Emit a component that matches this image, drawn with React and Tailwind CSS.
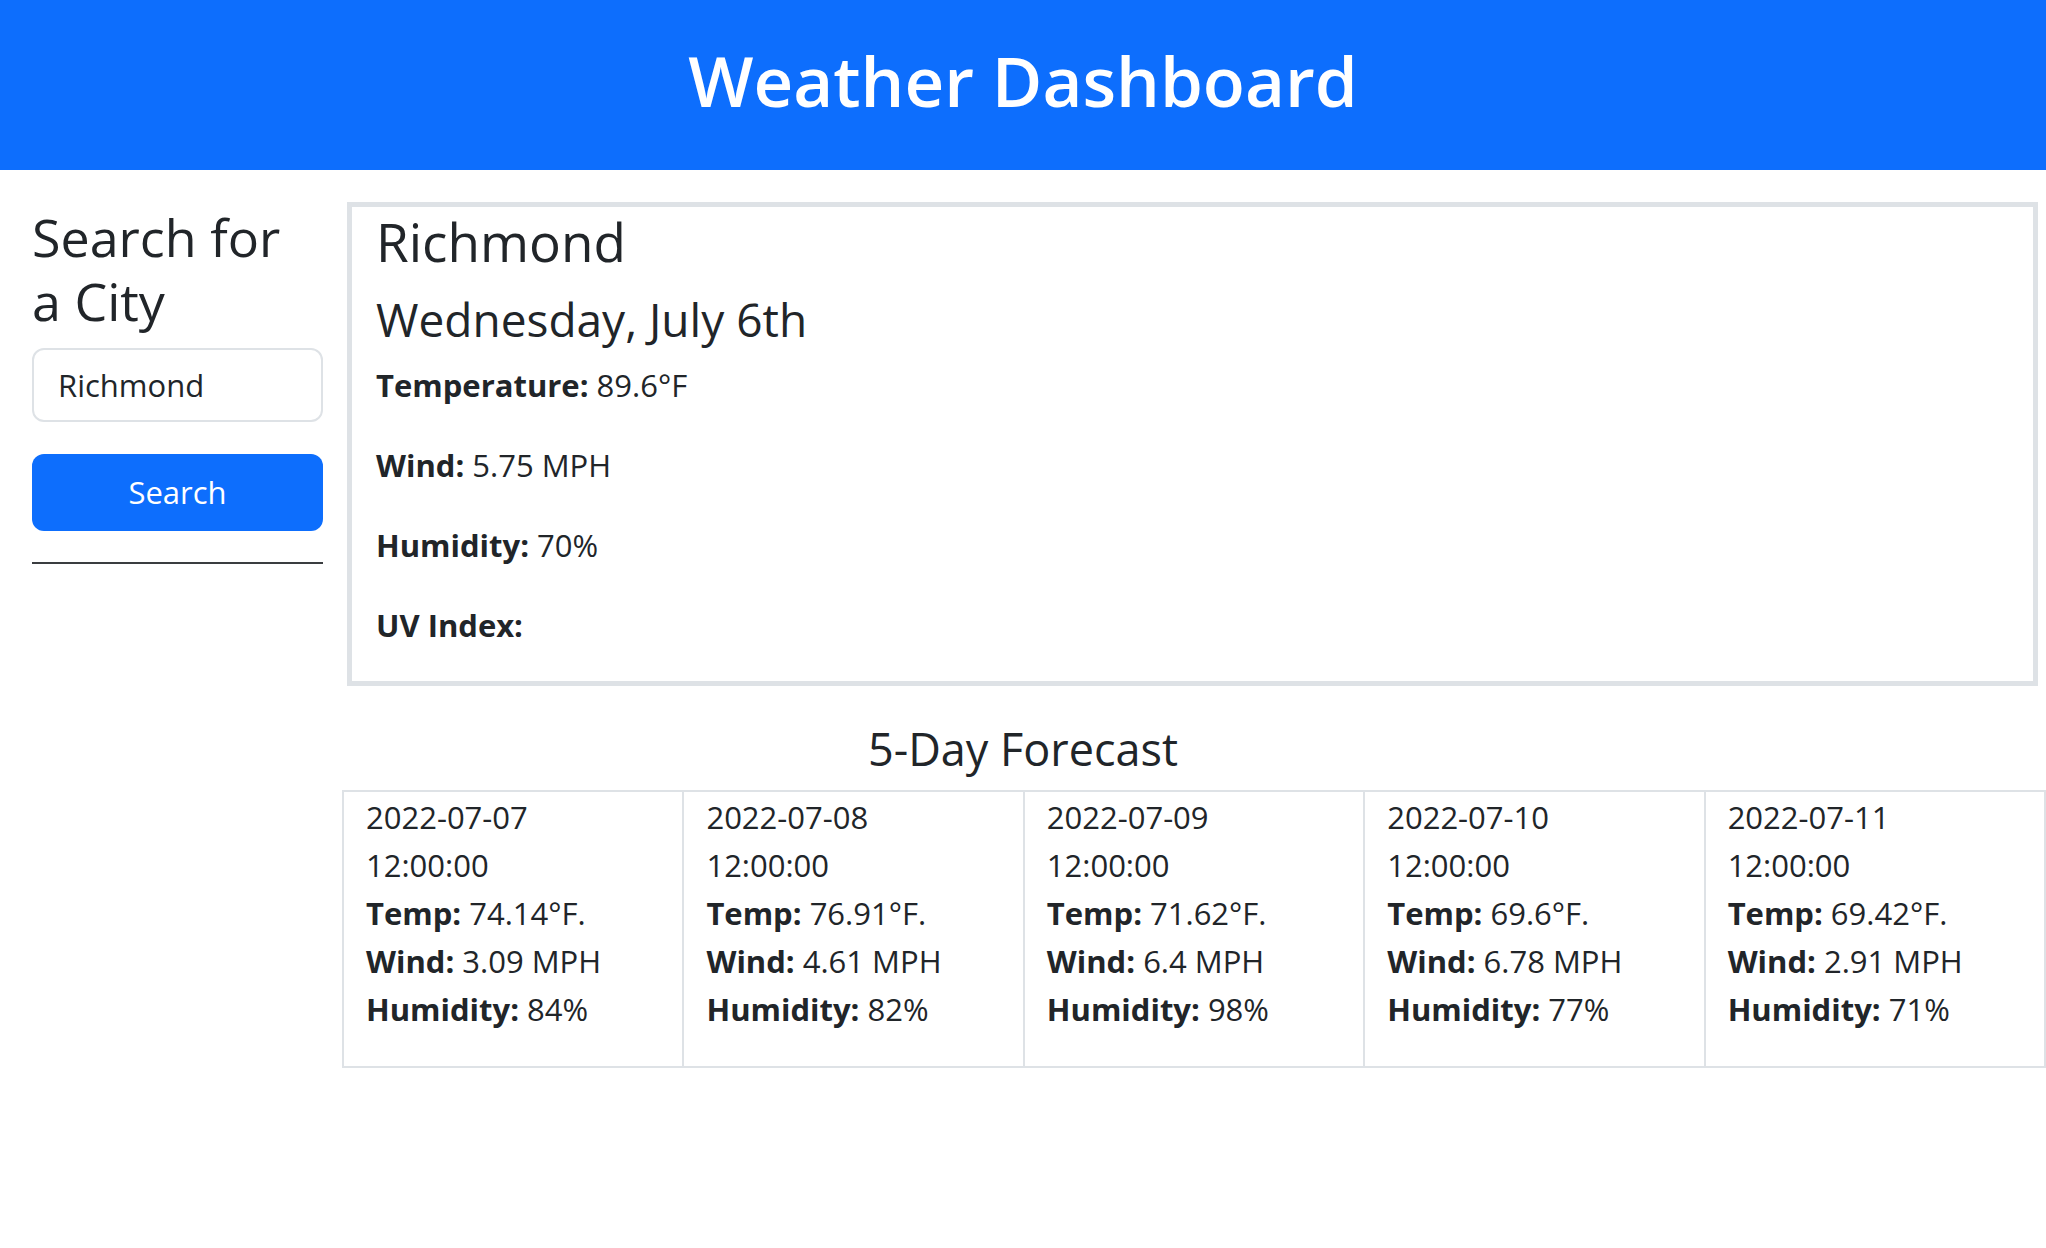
import React from 'react';

const forecast = [
  { date: '2022-07-07', temp: '74.14', wind: '3.09', humidity: '84' },
  { date: '2022-07-08', temp: '76.91', wind: '4.61', humidity: '82' },
  { date: '2022-07-09', temp: '71.62', wind: '6.4', humidity: '98' },
  { date: '2022-07-10', temp: '69.6', wind: '6.78', humidity: '77' },
  { date: '2022-07-11', temp: '69.42', wind: '2.91', humidity: '71' },
];

function Stat({ label, value }) {
  return (
    <p className="mb-[32px] text-[31px] leading-[48px]">
      <span className="font-bold">{label}</span> {value}
    </p>
  );
}

function ForecastCard({ day }) {
  return (
    <div className="flex-1 border-r-2 border-[#dee2e6] pl-[22px] pt-[1px] pb-[33px] text-[31px] leading-[48px]">
      <div>{day.date}</div>
      <div>12:00:00</div>
      <div><span className="font-bold">Temp:</span> {day.temp}°F.</div>
      <div><span className="font-bold">Wind:</span> {day.wind} MPH</div>
      <div><span className="font-bold">Humidity:</span> {day.humidity}%</div>
    </div>
  );
}

export default function App() {
  return (
    <div className="min-h-screen bg-white text-[#212529] font-['Open_Sans',sans-serif]">
      {/* header */}
      <header className="h-[170px] bg-[#0d6efd]">
        <h1 className="pt-[39px] text-center text-[69px] leading-[83px] font-semibold text-white">
          Weather Dashboard
        </h1>
      </header>

      <div className="mt-[32px] flex">
        {/* search sidebar */}
        <aside className="w-[341px] shrink-0 pl-[32px] pr-[18px] pt-[3px]">
          <h3 className="text-[52px] leading-[64px] font-medium">
            Search for<br />a City
          </h3>
          <input
            type="text"
            defaultValue="Richmond"
            className="mt-[15px] block h-[74px] w-full rounded-[12px] border-2 border-[#dee2e6] pl-[24px] text-[31px] text-[#212529] outline-none"
          />
          <button
            type="button"
            className="mt-[32px] block h-[77px] w-full rounded-[12px] bg-[#0d6efd] text-[31px] text-white"
          >
            Search
          </button>
          <div className="mt-[31px] h-[2px] bg-[#3a3d40]" />
        </aside>

        {/* current weather */}
        <section className="ml-[6px] mr-[8px] flex-1 border-[5px] border-[#dee2e6] pl-[24px] pt-[3px]">
          <h2 className="text-[53px] leading-[64px] font-medium">Richmond</h2>
          <h4 className="mt-[18px] text-[46px] leading-[54px] font-medium">Wednesday, July 6th</h4>
          <div className="mt-[15px]">
            <Stat label="Temperature:" value="89.6°F" />
            <Stat label="Wind:" value="5.75 MPH" />
            <Stat label="Humidity:" value="70%" />
            <Stat label="UV Index:" value="" />
          </div>
        </section>
      </div>

      {/* 5 day forecast */}
      <h3 className="mt-[36px] text-center text-[45px] leading-[54px] font-medium">5-Day Forecast</h3>
      <div className="mt-[14px] ml-[342px] flex border-y-2 border-l-2 border-[#dee2e6]">
        {forecast.map(day => (
          <ForecastCard key={day.date} day={day} />
        ))}
      </div>
    </div>
  );
}
